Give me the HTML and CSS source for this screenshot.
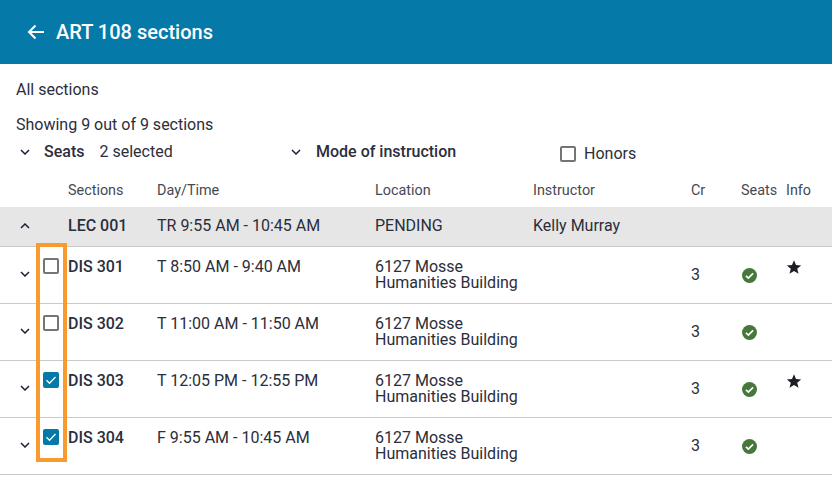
FILE: index.html
```html
<!DOCTYPE html>
<html lang="en-US">
  <head>
    <title>ART 108 sections</title>
    <meta charset="utf-8" />
    <link rel="stylesheet" href="styles.css">
  </head>
  <body>
    <header class="topBar">
      <svg class="backIcon" viewBox="0 0 18 16" width="18" height="16"><path d="M17 8H2M8.500 1.500 2 8l6.500 6.500" fill="none" stroke="white" stroke-width="2"/></svg>
      <h1>ART 108 sections</h1>
    </header>
    <main>
      <p class="allSections">All sections</p>
      <p class="showing">Showing 9 out of 9 sections</p>
      <div class="filters">
        <div class="filter seatsFilter">
          <svg class="chevron" viewBox="0 0 10 6" width="10" height="6"><path d="M1 1l4 4 4-4" /></svg>
          <span class="filterName">Seats</span>
          <span class="filterValue">2 selected</span>
        </div>
        <div class="filter modeFilter">
          <svg class="chevron" viewBox="0 0 10 6" width="10" height="6"><path d="M1 1l4 4 4-4" /></svg>
          <span class="filterName modeName">Mode of instruction</span>
        </div>
        <div class="filter honorsFilter">
          <span class="box"></span>
          <span class="filterValue">Honors</span>
        </div>
      </div>
      <div class="row headRow">
        <span class="sectionCol">Sections</span>
        <span>Day/Time</span>
        <span>Location</span>
        <span>Instructor</span>
        <span>Cr</span>
        <span>Seats</span>
        <span>Info</span>
      </div>
      <div class="row lecRow">
        <svg class="chevron" viewBox="0 0 10 6" width="10" height="6"><path d="M1 5l4-4 4 4" /></svg>
        <b class="sectionCol">LEC 001</b>
        <span>TR 9:55 AM - 10:45 AM</span>
        <span>PENDING</span>
        <span>Kelly Murray</span>
      </div>
      <div class="disRows">
        <div class="row disRow">
          <svg class="chevron" viewBox="0 0 10 6" width="10" height="6"><path d="M1 1l4 4 4-4" /></svg>
          <span class="box"></span>
          <b class="cellText">DIS 301</b>
          <span class="cellText">T 8:50 AM - 9:40 AM</span>
          <span class="location">6127 Mosse<br />Humanities Building</span>
          <span></span>
          <span class="credits">3</span>
          <svg class="seatIcon" viewBox="0 0 16 16" width="15" height="15"><circle cx="8" cy="8" r="8" fill="#46783c"/><path d="M4.200 8.300l2.600 2.500 5-5" fill="none" stroke="white" stroke-width="1.800"/></svg>
          <svg class="star" viewBox="0 0 16 16" width="16" height="16"><path d="M8 1.200l2 4.800 5.200.4-4 3.400 1.300 5L8 12.100l-4.500 2.700 1.300-5-4-3.400L6 6z"/></svg>
        </div>
        <div class="row disRow">
          <svg class="chevron" viewBox="0 0 10 6" width="10" height="6"><path d="M1 1l4 4 4-4" /></svg>
          <span class="box"></span>
          <b class="cellText">DIS 302</b>
          <span class="cellText">T 11:00 AM - 11:50 AM</span>
          <span class="location">6127 Mosse<br />Humanities Building</span>
          <span></span>
          <span class="credits">3</span>
          <svg class="seatIcon" viewBox="0 0 16 16" width="15" height="15"><circle cx="8" cy="8" r="8" fill="#46783c"/><path d="M4.200 8.300l2.600 2.500 5-5" fill="none" stroke="white" stroke-width="1.800"/></svg>
        </div>
        <div class="row disRow">
          <svg class="chevron" viewBox="0 0 10 6" width="10" height="6"><path d="M1 1l4 4 4-4" /></svg>
          <span class="box checked"><svg viewBox="0 0 16 16" width="16" height="16"><path d="M3.500 8.200l3 3 6-6.200" fill="none" stroke="white" stroke-width="1.300"/></svg></span>
          <b class="cellText">DIS 303</b>
          <span class="cellText">T 12:05 PM - 12:55 PM</span>
          <span class="location">6127 Mosse<br />Humanities Building</span>
          <span></span>
          <span class="credits">3</span>
          <svg class="seatIcon" viewBox="0 0 16 16" width="15" height="15"><circle cx="8" cy="8" r="8" fill="#46783c"/><path d="M4.200 8.300l2.600 2.500 5-5" fill="none" stroke="white" stroke-width="1.800"/></svg>
          <svg class="star" viewBox="0 0 16 16" width="16" height="16"><path d="M8 1.200l2 4.800 5.200.4-4 3.400 1.300 5L8 12.100l-4.500 2.700 1.300-5-4-3.400L6 6z"/></svg>
        </div>
        <div class="row disRow">
          <svg class="chevron" viewBox="0 0 10 6" width="10" height="6"><path d="M1 1l4 4 4-4" /></svg>
          <span class="box checked"><svg viewBox="0 0 16 16" width="16" height="16"><path d="M3.500 8.200l3 3 6-6.200" fill="none" stroke="white" stroke-width="1.300"/></svg></span>
          <b class="cellText">DIS 304</b>
          <span class="cellText">F 9:55 AM - 10:45 AM</span>
          <span class="location">6127 Mosse<br />Humanities Building</span>
          <span></span>
          <span class="credits">3</span>
          <svg class="seatIcon" viewBox="0 0 16 16" width="15" height="15"><circle cx="8" cy="8" r="8" fill="#46783c"/><path d="M4.200 8.300l2.600 2.500 5-5" fill="none" stroke="white" stroke-width="1.800"/></svg>
        </div>
        <div class="highlight"></div>
      </div>
    </main>
  </body>
</html>
```

FILE: styles.css
```css
* {
  box-sizing: border-box;
}
html {
  background-color: white;
}
body {
  margin: 0;
  overflow: hidden;
  color: hsl(228, 15%, 20%);
  font-family: Roboto, "Liberation Sans", sans-serif;
  font-size: 16px;
  line-height: 16px;
}
p {
  margin: 0;
}
b {
  font-weight: 500;
}
.topBar {
  display: flex;
  align-items: center;
  height: 64px;
  padding-left: 27px;
  background-color: #0579a8;
}
.topBar h1 {
  margin: 0 0 0 11px;
  color: white;
  font-size: 20px;
  font-weight: 500;
}
.allSections {
  padding: 18px 0 0 16px;
}
.showing {
  padding: 19px 0 0 16px;
}
.filters {
  display: flex;
  height: 39px;
  padding-top: 9px;
  padding-left: 20px;
}
.filter {
  display: flex;
  align-items: center;
  height: 20px;
}
.seatsFilter {
  width: 271px;
}
.modeFilter {
  width: 269px;
}
.filterName {
  margin-left: 14px;
  font-weight: 500;
}
.modeName {
  margin-left: 15px;
}
.filterValue {
  margin-left: 15px;
}
.honorsFilter {
  margin-top: 2px;
}
.honorsFilter .filterValue {
  margin-left: 8px;
}
.chevron {
  fill: none;
  stroke: hsl(228, 30%, 15%);
  stroke-width: 1.500;
}
.box {
  display: block;
  width: 16px;
  height: 16px;
  border: 2px solid #757575;
  border-radius: 2px;
}
.box.checked {
  border: none;
  background-color: #0579a8;
}
.box svg {
  display: block;
}
.row {
  display: grid;
  grid-template-columns: 36px 32px 89px 218px 158px 158px 50px 45px 46px;
  width: 832px;
}
.headRow {
  height: 35px;
  padding-top: 11px;
  color: hsl(228, 8%, 30%);
  font-size: 14.4px;
}
.headRow .sectionCol {
  grid-column: 3;
}
.lecRow {
  align-items: center;
  height: 40px;
  padding-bottom: 1px;
  border-bottom: 1px solid #cacaca;
  background-color: #e6e6e6;
}
.lecRow .chevron {
  margin-left: 20px;
}
.lecRow .sectionCol {
  grid-column: 3;
}
.disRows {
  position: relative;
}
.disRow {
  height: 57px;
  padding-top: 11px;
  border-bottom: 1px solid #cacaca;
}
.disRow .chevron {
  margin: 13px 0 0 20px;
}
.disRow .box {
  margin-left: 7px;
}
.cellText {
  margin-top: 1px;
}
.location {
  margin-top: 1px;
}
.credits {
  margin-top: 9px;
}
.seatIcon {
  margin: 10px 0 0 1px;
}
.star {
  margin: 1px 0 0 0;
  fill: #1d1d26;
}
.highlight {
  position: absolute;
  top: -4px;
  left: 36px;
  width: 31px;
  height: 219px;
  border: 4px solid #f99a2f;
}
```
